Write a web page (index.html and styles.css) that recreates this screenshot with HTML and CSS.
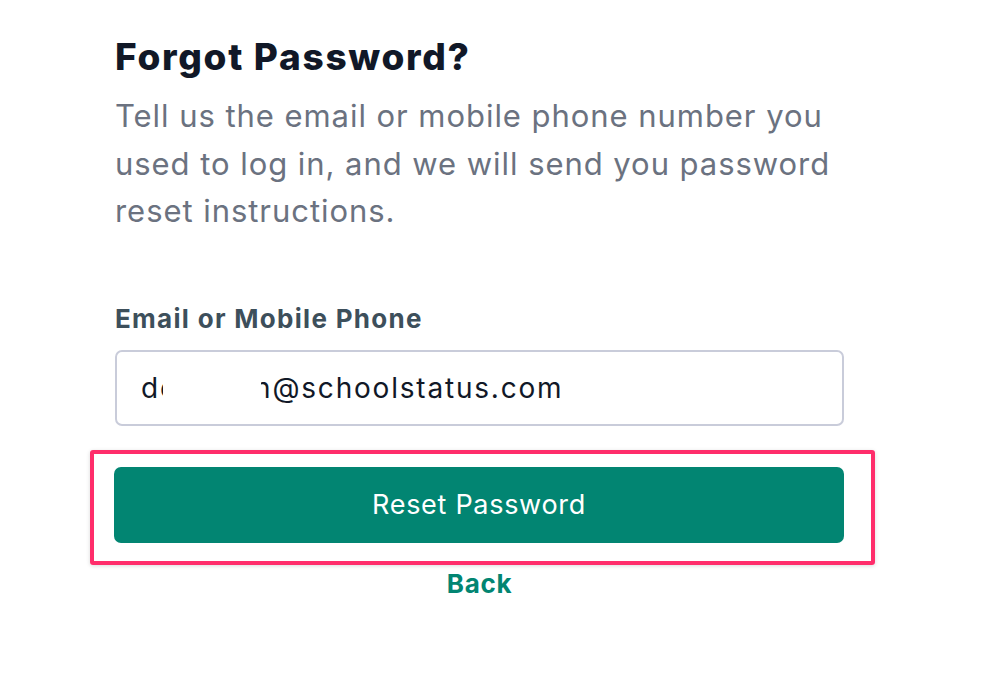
FILE: index.html
```html
<!DOCTYPE html>
<html lang="en">
<head>
<meta charset="utf-8">
<title>Forgot Password</title>
<link rel="stylesheet" href="styles.css">
</head>
<body>
<main class="page">
  <section class="card">
    <h1 class="title">Forgot Password?</h1>
    <p class="lead">Tell us the email or mobile phone number you used to log in, and we will send you password reset instructions.</p>
    <form class="form">
      <label class="label">Email or Mobile Phone</label>
      <div class="field">
        <span class="value">de<span class="gap"></span>n@schoolstatus.com</span>
        <span class="redact"></span>
      </div>
      <div class="highlight">
        <button type="button" class="btn">Reset Password</button>
      </div>
      <a class="back" href="#">Back</a>
    </form>
  </section>
</main>
</body>
</html>
```
FILE: styles.css
```css
* { box-sizing: border-box; }
html, body { margin: 0; padding: 0; background: #fff; }
body { font-family: Inter, "Noto Sans", sans-serif; }
.page { padding: 35px 0 0 115px; }
.card { width: 729px; display: flex; flex-direction: column; }
.title {
  margin: 0;
  font-size: 37px;
  font-weight: 800;
  color: #111827;
  line-height: 44px;
  letter-spacing: 1.7px;
}
.lead {
  margin: 13px 0 0;
  font-size: 31px;
  line-height: 47.5px;
  color: #6b7280;
  letter-spacing: 0.95px;
  width: 729px;
}
.form { display: flex; flex-direction: column; margin-top: 68px; }
.label {
  font-size: 26px;
  font-weight: 700;
  color: #3d4f5b;
  line-height: 32px;
  letter-spacing: 1.3px;
}
.field {
  position: relative;
  margin-top: 15px;
  height: 76px;
  border: 2px solid #c9ccda;
  border-radius: 7px;
  display: flex;
  align-items: center;
  padding-left: 24px;
  font-size: 28px;
  letter-spacing: 1.8px;
  color: #111827;
}
.gap { display: inline-block; width: 76px; }
.redact {
  position: absolute;
  left: 46px; top: 10px;
  width: 98px; height: 52px;
  background: #fff;
}
.highlight {
  margin: 24px 0 0 -25px;
  width: 785px;
  border: 4px solid #ff2d6b;
  border-radius: 3px;
  padding: 13px 27px 18px 20px;
  box-shadow: 0 1px 4px rgba(0,0,0,0.15);
}
.btn {
  display: block;
  width: 730px;
  height: 76px;
  border: 0;
  border-radius: 7px;
  background: #028572;
  color: #fff;
  font-family: Inter, "Noto Sans", sans-serif;
  font-size: 27px;
  letter-spacing: 0.7px;
  cursor: pointer;
}
.back {
  align-self: center;
  margin-top: 2px;
  font-size: 26px;
  font-weight: 700;
  color: #028572;
  text-decoration: none;
  line-height: 34px;
  letter-spacing: 0.7px;
}
```
